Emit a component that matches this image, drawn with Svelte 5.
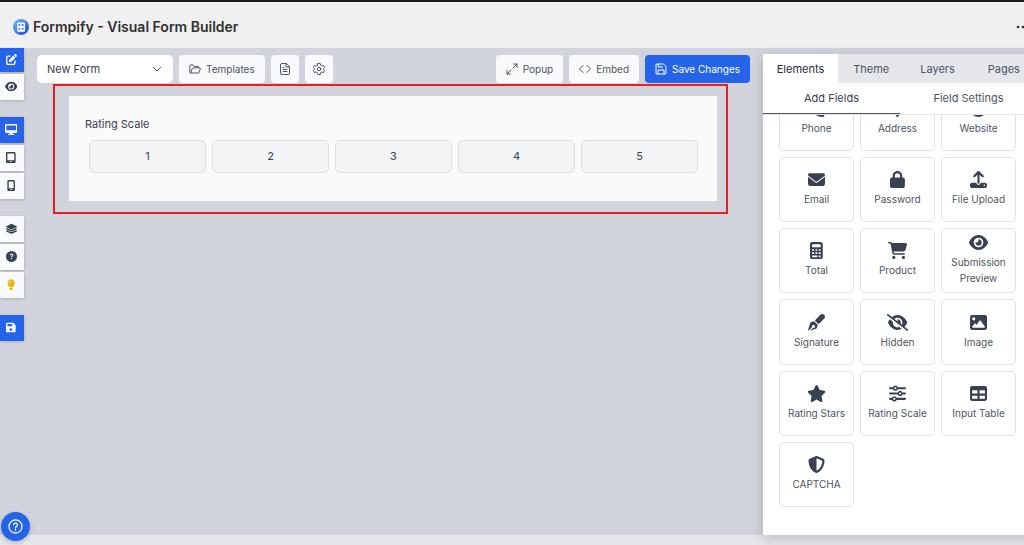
<script>
  const eye = 'M288 32c-80.8 0-145.5 36.8-192.6 80.6C48.6 156 17.3 208 2.5 243.7c-3.3 7.9-3.3 16.7 0 24.6C17.3 304 48.6 356 95.4 399.4C142.5 443.2 207.2 480 288 480s145.5-36.8 192.6-80.6c46.8-43.5 78.1-95.4 93-131.1c3.3-7.9 3.3-16.7 0-24.6c-14.9-35.7-46.2-87.7-93-131.1C433.5 68.8 368.8 32 288 32zM144 256a144 144 0 1 1 288 0 144 144 0 1 1 -288 0zm144-64c0 35.3-28.7 64-64 64c-7.1 0-13.9-1.2-20.3-3.3c-5.5-1.8-11.9 1.6-11.7 7.4c.3 6.9 1.3 13.8 3.2 20.7c13.7 51.2 66.4 81.6 117.6 67.9s81.6-66.4 67.9-117.6c-11.1-41.5-47.8-69.4-88.6-71.1c-5.8-.2-9.2 6.1-7.4 11.7c2.1 6.4 3.3 13.2 3.3 20.3z';

  const icons = {
    phone: [512, 'M160 25c-8-19-28-29-48-24L24 25C10 29 0 42 0 56c0 252 204 456 456 456 14 0 27-10 31-24l24-88c5-20-5-40-24-48l-96-40c-16-7-35-2-46 12l-40 49c-70-33-127-90-160-160l49-40c14-11 19-30 12-46z'],
    address: [384, 'M216 499c51-64 168-220 168-307C384 86 298 0 192 0S0 86 0 192c0 87 117 243 168 307 12 15 36 15 48 0zM192 128a64 64 0 1 1 0 128 64 64 0 1 1 0-128z'],
    website: [512, 'M256 0a256 256 0 1 0 0 512 256 256 0 1 0 0-512zM60 200h72c-3 36-3 76 0 112H60c-12-36-12-76 0-112zm124 0h144c4 36 4 76 0 112H184c-4-36-4-76 0-112zm196 0h72c12 36 12 76 0 112h-72c3-36 3-76 0-112z'],
    email: [512, 'M48 64C21.5 64 0 85.5 0 112c0 15.1 7.1 29.3 19.2 38.4L236.8 313.6c11.4 8.5 27 8.5 38.4 0L492.8 150.4c12.1-9.1 19.2-23.3 19.2-38.4c0-26.5-21.5-48-48-48H48zM0 176V384c0 35.3 28.7 64 64 64H448c35.3 0 64-28.7 64-64V176L294.4 339.2c-22.8 17.1-54 17.1-76.8 0L0 176z'],
    lock: [448, 'M144 144v48H304V144c0-44.2-35.8-80-80-80s-80 35.8-80 80zM80 192V144C80 64.5 144.5 0 224 0s144 64.5 144 144v48h16c35.3 0 64 28.7 64 64V448c0 35.3-28.7 64-64 64H64c-35.3 0-64-28.7-64-64V256c0-35.3 28.7-64 64-64H80z'],
    upload: [512, 'M288 109.3V352c0 17.7-14.3 32-32 32s-32-14.3-32-32V109.3l-73.4 73.4c-12.5 12.5-32.8 12.5-45.3 0s-12.5-32.8 0-45.3l128-128c12.5-12.5 32.8-12.5 45.3 0l128 128c12.5 12.5 12.5 32.8 0 45.3s-32.8 12.5-45.3 0L288 109.3zM64 352H192c0 35.3 28.7 64 64 64s64-28.7 64-64H448c35.3 0 64 28.7 64 64v32c0 35.3-28.7 64-64 64H64c-35.3 0-64-28.7-64-64V416c0-35.3 28.7-64 64-64zM432 456a24 24 0 1 0 0-48 24 24 0 1 0 0 48z'],
    total: [384, 'M64 0C28.7 0 0 28.7 0 64V448c0 35.3 28.7 64 64 64H320c35.3 0 64-28.7 64-64V64c0-35.3-28.7-64-64-64H64zM64 64H320V160H64zM64 216H120V264H64zM164 216H220V264H164zM264 216H320V264H264zM64 312H120V360H64zM164 312H220V360H164zM264 312H320V360H264zM64 408H220V456H64zM264 408H320V456H264z'],
    cart: [576, 'M0 24C0 10.7 10.7 0 24 0H69.5c22 0 41.5 12.8 50.6 32h411c26.3 0 45.5 25 38.6 50.4l-41 152.3c-8.5 31.4-37 53.3-69.5 53.3H170.7l5.4 28.5c2.2 11.3 12.1 19.5 23.6 19.5H488c13.3 0 24 10.7 24 24s-10.7 24-24 24H199.7c-34.6 0-64.3-24.6-70.7-58.5L77.4 54.5c-.7-3.8-4-6.5-7.9-6.5H24C10.7 48 0 37.3 0 24zM128 464a48 48 0 1 1 96 0 48 48 0 1 1 -96 0zm336-48a48 48 0 1 1 0 96 48 48 0 1 1 0-96z'],
    eye: [576, eye],
    signature: [512, 'M373 24 207 193l112 112L488 139c32-32 32-83 0-115s-83-32-115 0zM184 216 98 242c-16 5-28 17-33 33L0 490l12 14 111-111a44 44 0 1 1 26 26L38 510l-14 2 213-65c16-5 28-17 33-33l26-86z'],
    hidden: [640, 'M38.8 5.1C28.4-3.1 13.3-1.2 5.1 9.2S-1.2 34.7 9.2 42.9l592 464c10.4 8.2 25.5 6.3 33.7-4.1s6.3-25.5-4.1-33.7L525.6 386.7c39.6-40.6 66.4-86.1 79.9-118.4c3.3-7.9 3.3-16.7 0-24.6c-14.9-35.7-46.2-87.7-93-131.1C465.5 68.8 400.8 32 320 32c-68.2 0-125 26.3-169.3 60.8L38.8 5.1zM223.1 149.5C248.6 126.2 282.7 112 320 112c79.5 0 144 64.5 144 144c0 24.9-6.3 48.3-17.4 68.7L408 294.5c8.4-19.3 10.6-41.4 4.8-63.3c-11.1-41.5-47.8-69.4-88.6-71.1c-5.8-.2-9.2 6.1-7.4 11.7c2.1 6.4 3.3 13.2 3.3 20.3c0 10.2-2.4 19.8-6.6 28.3l-90.3-70.8zM373 389.9c-16.4 6.5-34.3 10.1-53 10.1c-79.5 0-144-64.5-144-144c0-6.9 .5-13.6 1.4-20.2L83.1 161.5C60.3 191.2 44 220.8 34.5 243.7c-3.3 7.9-3.3 16.7 0 24.6c14.9 35.7 46.2 87.7 93 131.1C174.5 443.2 239.2 480 320 480c47.8 0 89.9-12.9 126.2-32.5L373 389.9z'],
    image: [512, 'M0 96C0 60.7 28.7 32 64 32H448c35.3 0 64 28.7 64 64V416c0 35.3-28.7 64-64 64H64c-35.3 0-64-28.7-64-64V96zM323.8 202.5c-4.5-6.6-11.9-10.5-19.8-10.5s-15.4 3.9-19.8 10.5l-87 127.6L170.7 297c-4.6-5.7-11.5-9-18.7-9s-14.2 3.3-18.7 9l-64 80c-5.8 7.2-6.9 17.1-2.9 25.4s12.4 13.6 21.6 13.6h96 32H424c8.9 0 17.1-4.9 21.2-12.8s3.6-17.4-1.4-24.7l-120-176zM112 192a48 48 0 1 0 0-96 48 48 0 1 0 0 96z'],
    star: [576, 'M316.9 18C311.6 7 300.4 0 288.1 0s-23.4 7-28.8 18L195 150.3 51.4 171.5c-12 1.8-22 10.2-25.7 21.7s-.7 24.2 7.9 32.7L137.8 329 113.2 474.7c-2 12 3 24.2 12.9 31.3s23 8 33.8 2.3l128.3-68.5 128.3 68.5c10.8 5.7 23.9 4.9 33.8-2.3s14.9-19.3 12.9-31.3L438.5 329 542.7 225.9c8.6-8.5 11.7-21.2 7.9-32.7s-13.7-19.9-25.7-21.7L381.2 150.3 316.9 18z'],
    scale: [512, 'M32 64H119a80 80 0 0 1 146 0H480a32 32 0 0 1 0 64H265a80 80 0 0 1-146 0H32a32 32 0 0 1 0-64zM192 64a32 32 0 1 0 0 64 32 32 0 1 0 0-64zM32 224H263a80 80 0 0 1 146 0H480a32 32 0 0 1 0 64H409a80 80 0 0 1-146 0H32a32 32 0 0 1 0-64zM336 224a32 32 0 1 0 0 64 32 32 0 1 0 0-64zM32 384H87a80 80 0 0 1 146 0H480a32 32 0 0 1 0 64H233a80 80 0 0 1-146 0H32a32 32 0 0 1 0-64zM160 384a32 32 0 1 0 0 64 32 32 0 1 0 0-64z'],
    table: [512, 'M64 32C28.7 32 0 60.7 0 96V416c0 35.3 28.7 64 64 64H448c35.3 0 64-28.7 64-64V96c0-35.3-28.7-64-64-64H64zM64 160H224V256H64zM288 160H448V256H288zM64 320H224V416H64zM288 320H448V416H288z'],
    shield: [512, 'M269 3a32 32 0 0 0-26 0L54 83c-22 9-38 31-38 57 1 99 41 281 214 363 16 8 36 8 52 0 173-82 213-264 214-363 0-26-16-48-38-57zM256 67l176 75c-1 85-37 233-176 303z'],
    edit: [512, 'M471.6 21.7c-21.9-21.9-57.3-21.9-79.2 0L362.3 51.7l97.9 97.9 30.1-30.1c21.9-21.9 21.9-57.3 0-79.2L471.6 21.7zm-299.2 220c-6.1 6.1-10.8 13.6-13.5 21.9l-29.6 88.8c-2.9 8.6-.6 18.1 5.8 24.6s15.9 8.7 24.6 5.8l88.8-29.6c8.2-2.7 15.7-7.4 21.9-13.5L437.7 172.3 339.7 74.3 172.4 241.7zM96 64C43 64 0 107 0 160V416c0 53 43 96 96 96H352c53 0 96-43 96-96V320c0-17.7-14.3-32-32-32s-32 14.3-32 32v96c0 17.7-14.3 32-32 32H96c-17.7 0-32-14.3-32-32V160c0-17.7 14.3-32 32-32h96c17.7 0 32-14.3 32-32s-14.3-32-32-32H96z'],
    desktop: [576, 'M64 0C28.7 0 0 28.7 0 64V352c0 35.3 28.7 64 64 64H240l-11 32H176a32 32 0 0 0 0 64H400a32 32 0 0 0 0-64H347l-11-32H512c35.3 0 64-28.7 64-64V64c0-35.3-28.7-64-64-64zM64 64H512V288H64z'],
    tablet: [448, 'M64 0C28.7 0 0 28.7 0 64V448c0 35.3 28.7 64 64 64H384c35.3 0 64-28.7 64-64V64c0-35.3-28.7-64-64-64zM64 64H384V384H64zM176 432H272V464H176z'],
    mobile: [384, 'M80 0C45 0 16 29 16 64V448c0 35 29 64 64 64H304c35 0 64-29 64-64V64c0-35-29-64-64-64zM80 64H304V384H80zM144 432H240V464H144z'],
    layers: [512, 'M12 149 234 42c14-6 30-6 44 0l222 107c16 8 16 24 0 32L278 286c-14 6-30 6-44 0L12 181c-16-8-16-24 0-32zM58 232l162 77c23 11 49 11 72 0l162-77 46 22c16 8 16 24 0 32L278 391c-14 6-30 6-44 0L12 286c-16-8-16-24 0-32zM58 337l162 77c23 11 49 11 72 0l162-77 46 22c16 8 16 24 0 32L278 496c-14 6-30 6-44 0L12 391c-16-8-16-24 0-32z'],
    help: [512, 'M256 512A256 256 0 1 0 256 0a256 256 0 1 0 0 512zM170 165c8-22 29-37 53-37h58c35 0 63 28 63 63 0 23-12 44-32 55l-32 18c0 13-11 24-24 24s-24-11-24-24v-14c0-9 5-17 12-21l44-25c5-3 8-8 8-14 0-8-7-14-15-14h-58c-4 0-7 2-8 5-13 27-53 12-45-16zM224 352a32 32 0 1 1 64 0 32 32 0 1 1-64 0z'],
    bulb: [384, 'M272 384c10-32 30-59 49-86 20-28 31-62 31-98C352 90 272 16 192 16S32 90 32 200c0 36 11 70 31 98 19 27 39 54 49 86zM192 512c44 0 80-30 80-64v-24H112v24c0 34 36 64 80 64zM112 192a16 16 0 0 1-32 0c0-60 50-112 112-112a16 16 0 0 1 0 32c-44 0-80 36-80 80z'],
    save: [448, 'M64 32C28.7 32 0 60.7 0 96V416c0 35.3 28.7 64 64 64H384c35.3 0 64-28.7 64-64V173c0-17-7-33-19-45L352 51c-12-12-28-19-45-19zM64 104c0-5 3-8 8-8H280c5 0 8 3 8 8v80c0 5-3 8-8 8H72c-5 0-8-3-8-8zM224 288a64 64 0 1 1 0 128 64 64 0 1 1 0-128z'],
  };

  const rail = [
    [['edit', 'Edit', 'on'], ['eye', 'Preview', '']],
    [['desktop', 'Desktop', 'on'], ['tablet', 'Tablet', ''], ['mobile', 'Mobile', '']],
    [['layers', 'Layers', ''], ['help', 'Help', ''], ['bulb', 'Tips', 'tip']],
    [['save', 'Save', 'on']],
  ];

  const fields = [
    ['phone', 'Phone'], ['address', 'Address'], ['website', 'Website'],
    ['email', 'Email'], ['lock', 'Password'], ['upload', 'File Upload'],
    ['total', 'Total'], ['cart', 'Product'], ['eye', 'Submission Preview'],
    ['signature', 'Signature'], ['hidden', 'Hidden'], ['image', 'Image'],
    ['star', 'Rating Stars'], ['scale', 'Rating Scale'], ['table', 'Input Table'],
    ['shield', 'CAPTCHA'],
  ];

  const tabs = ['Elements', 'Theme', 'Layers', 'Pages'];
  let tab = $state('Elements');
  let rating = $state(0);
</script>

{#snippet glyph(name)}
  <svg class="glyph" viewBox="0 0 {icons[name][0]} 512" aria-hidden="true">
    <path fill="currentColor" fill-rule="evenodd" d={icons[name][1]} />
  </svg>
{/snippet}

<div class="app">
  <header>
    <svg class="logo" viewBox="0 0 16 16" aria-hidden="true">
      <defs>
        <linearGradient id="g" x1="0" y1="0" x2="1" y2="1">
          <stop offset="0.2" stop-color="#60a5fa" />
          <stop offset="0.9" stop-color="#1d4ed8" />
        </linearGradient>
      </defs>
      <circle cx="8" cy="8" r="8" fill="url(#g)" />
      <rect x="4.2" y="3.4" width="7.8" height="9.4" rx="1" fill="#fff" />
      <path d="M5.4 5h2v2h-2zM8.7 5h2v2h-2zM5.4 8.8h2v2h-2zM8.7 8.8h2v2h-2z" fill="#4d8ff5" />
    </svg>
    <h1>Formpify - Visual Form Builder</h1>
    <button class="more" aria-label="More">
      <svg viewBox="0 0 14 4" aria-hidden="true"><g fill="#303030"><circle cx="2" cy="2" r="1.3" /><circle cx="7" cy="2" r="1.3" /><circle cx="12" cy="2" r="1.3" /></g></svg>
    </button>
  </header>

  <div class="work">
    <nav class="rail">
      {#each rail as group}
        <div class="group">
          {#each group as [icon, label, kind]}
            <button class={kind} aria-label={label}>{@render glyph(icon)}</button>
          {/each}
        </div>
      {/each}
    </nav>

    <main>
      <div class="toolbar">
        <div class="picker">
          <select aria-label="Form"><option>New Form</option></select>
          <svg class="chev" viewBox="0 0 10 6" aria-hidden="true"><path d="M1 1l4 4 4-4" /></svg>
        </div>
        <button class="tool">
          <svg class="line" viewBox="0 0 24 24" aria-hidden="true"><path d="M3.6 20 6.5 10.8a1.6 1.6 0 0 1 1.5-1.1h13.2a1.4 1.4 0 0 1 1.4 1.9l-2.4 7.3a1.6 1.6 0 0 1-1.5 1.1H3.6A2 2 0 0 1 1.6 18V6a2 2 0 0 1 2-2H8l2.6 2.8h7a2 2 0 0 1 2 2v.9" /></svg>
          Templates
        </button>
        <button class="tool square" aria-label="Form details">
          <svg class="line" viewBox="0 0 24 24" aria-hidden="true"><path d="M14 1H6a3 3 0 0 0-3 3v16a3 3 0 0 0 3 3h12a3 3 0 0 0 3-3V8zM14 1v7h7M8 9h2M8 13h8M8 17h8" /></svg>
        </button>
        <button class="tool square" aria-label="Settings">
          <svg class="line" viewBox="0 0 24 24" aria-hidden="true"><path d="M9.5 1h5l.7 3.6 2.3 1.4 3.4-1.2 2.5 4.3-2.700 2.400v1l2.700 2.400-2.500 4.300-3.400-1.200-2.300 1.400-.7 3.600h-5l-.7-3.600L6.500 18l-3.400 1.200L.6 14.900l2.700-2.400v-1L.6 9.100l2.500-4.300L6.500 6l2.300-1.400z" /><circle cx="12" cy="12" r="3.5" /></svg>
        </button>
        <span class="space"></span>
        <button class="tool">
          <svg class="line" viewBox="0 0 24 24" aria-hidden="true"><path d="M15 2h7v7M22 2l-8 8M9 22H2v-7M2 22l8-8" /></svg>
          Popup
        </button>
        <button class="tool">
          <svg class="line" viewBox="0 0 24 24" aria-hidden="true"><path d="M8 5l-7 7 7 7M16 5l7 7-7 7" /></svg>
          Embed
        </button>
        <button class="tool primary">
          <svg class="line" viewBox="0 0 24 24" aria-hidden="true"><path d="M16 2H4a2 2 0 0 0-2 2v16a2 2 0 0 0 2 2h16a2 2 0 0 0 2-2V8zM6 22v-8h12v8M6.5 2v6H15" /></svg>
          Save Changes
        </button>
      </div>

      <div class="selection">
        <form>
          <fieldset>
            <legend>Rating Scale</legend>
            <div class="scale">
              {#each [1, 2, 3, 4, 5] as n}
                <button type="button" aria-pressed={rating === n} onclick={() => (rating = n)}>{n}</button>
              {/each}
            </div>
          </fieldset>
        </form>
      </div>
    </main>

    <aside>
      <div class="panel">
        <div class="tabs">
          {#each tabs as t}
            <button class:active={tab === t} onclick={() => (tab = t)}>{t}</button>
          {/each}
        </div>
        <div class="subtabs">
          <button class="active">Add Fields</button>
          <button>Field Settings</button>
        </div>
        <div class="list">
          <div class="grid">
            {#each fields as [icon, label]}
              <button class="card">{@render glyph(icon)}<span>{label}</span></button>
            {/each}
          </div>
        </div>
      </div>
    </aside>
  </div>

  <button class="support" aria-label="Support">
    <svg viewBox="0 0 24 24" aria-hidden="true"><circle cx="12" cy="12" r="10.5" /><path d="M9 9.5a3 3 0 1 1 4.5 2.6c-1 .6-1.5 1.2-1.5 2.400" /><path d="M12 17v1" /></svg>
  </button>
</div>

<style>
  :global(body) { margin: 0; }
  .app {
    position: relative;
    display: flex;
    flex-direction: column;
    height: 100vh;
    box-sizing: border-box;
    padding-bottom: 10px;
    overflow: hidden;
    background: #e5e7eb;
    border-top: 2px solid #1a1a1a;
    font-family: Inter, "Liberation Sans", sans-serif;
    font-size: 11px;
    color: #374151;
  }
  .app *, .app *::before { box-sizing: border-box; }
  button { font: inherit; color: inherit; border: 0; padding: 0; cursor: pointer; }
  header {
    display: flex;
    align-items: center;
    gap: 4px;
    flex: none;
    height: 46px;
    padding: 3px 0 0 13px;
    background: #f0f0f0;
  }
  .logo { width: 16px; height: 16px; }
  h1 { margin: 0; flex: 1; font-size: 14px; line-height: 20px; font-weight: 600; color: #303030; }
  .more { background: none; width: 8px; height: 20px; overflow: hidden; display: flex; align-items: center; }
  .more svg { width: 14px; height: 4px; flex: none; }

  .work { display: flex; flex: 1; min-height: 0; background: #d1d4dc; }
  .rail { display: flex; flex-direction: column; gap: 17px; width: 24px; flex: none; }
  .group { display: flex; flex-direction: column; gap: 2px; }
  .rail button {
    display: grid;
    place-items: center;
    height: 26px;
    padding: 0 2px 2px 0;
    background: #f9fafb;
    box-shadow: 0 1px 3px #0003;
  }
  .group:first-child button:first-child { height: 24px; }
  .rail .on { background: #2563eb; color: #fff; }
  .rail .tip { color: #eab308; }
  .rail .glyph { height: 11px; }
  .glyph { display: block; }

  main { flex: 1; min-width: 0; padding: 7px 13px 0 13px; }
  .toolbar { display: flex; gap: 6px; height: 28px; }
  .picker { position: relative; width: 136px; }
  select {
    appearance: none;
    width: 100%;
    height: 28px;
    padding: 0 24px 0 10px;
    border: 0;
    border-radius: 5px;
    background: #fff;
    font: inherit;
    color: #374151;
  }
  .chev { position: absolute; right: 11px; top: 11px; width: 10px; height: 6px; fill: none; stroke: #4b5563; stroke-width: 1; pointer-events: none; }
  .tool {
    display: flex;
    align-items: center;
    justify-content: center;
    gap: 5px;
    padding: 0 10px;
    border-radius: 4px;
    background: #f9fafb;
    font-size: 10px;
    color: #4b5563;
    white-space: nowrap;
  }
  .square { width: 28px; padding: 0; }
  .primary { background: #2563eb; color: #fff; }
  .line { width: 12px; height: 12px; flex: none; fill: none; stroke: currentColor; stroke-width: 2; stroke-linejoin: round; stroke-linecap: round; overflow: visible; }
  .space { flex: 1; }

  .selection { margin: 1px 22px 0 16px; padding: 10px 9px 11px 14px; border: 2px solid #ed1c24; }
  form { padding: 20px 19px 28px 16px; background: #fafafa; }
  fieldset { margin: 0; padding: 0; border: 0; min-width: 0; }
  legend { padding: 0; line-height: 16px; }
  .scale { display: grid; grid-template-columns: repeat(5, 1fr); gap: 6px; padding: 8px 0 0 4px; }
  .scale button { height: 33px; padding-bottom: 1px; border: 1px solid #dcdfe4; border-radius: 5px; background: #f3f4f6; }

  aside { flex: none; width: 261px; margin-top: 6px; overflow: visible; }
  .panel {
    display: flex;
    flex-direction: column;
    width: 274px;
    height: 100%;
    background: #fff;
    box-shadow: 0 4px 12px #0000002e;
  }
  .tabs { display: flex; flex: none; height: 29px; background: #e5e7eb; color: #4b5563; }
  .tabs button { flex: 1; background: none; }
  .tabs button.active { flex: none; width: 75px; background: #fff; color: #1f2937; }
  .subtabs { display: flex; flex: none; height: 32px; border-bottom: 1px solid #e5e7eb; }
  .subtabs button { flex: 1; height: 31px; background: none; color: #4b5563; border-bottom: 1px solid transparent; }
  .subtabs .active { color: #374151; border-color: #4b5563; }
  .list { flex: 1; min-height: 0; display: flex; flex-direction: column; justify-content: flex-end; overflow: hidden; padding: 0 21px 28px 16px; }
  .grid { display: grid; flex: none; grid-template-columns: repeat(3, 75px); grid-auto-rows: 1fr; gap: 6px; min-height: 421px; }
  .card {
    display: flex;
    flex-direction: column;
    align-items: center;
    justify-content: center;
    gap: 3px;
    padding: 0 4px 1px;
    border: 1px solid #e0e2e6;
    border-radius: 5px;
    background: #fff;
    font-size: 10px;
    line-height: 16px;
    color: #4b5563;
  }
  .card .glyph { height: 17px; color: #374151; flex: none; }

  .support {
    position: absolute;
    left: 1px;
    bottom: 4px;
    display: grid;
    place-items: center;
    width: 29px;
    height: 29px;
    border-radius: 50%;
    background: #2563eb;
    box-shadow: 0 2px 5px #0003;
  }
  .support svg { width: 15px; height: 15px; fill: none; stroke: #fff; stroke-width: 2; stroke-linecap: round; }
</style>
